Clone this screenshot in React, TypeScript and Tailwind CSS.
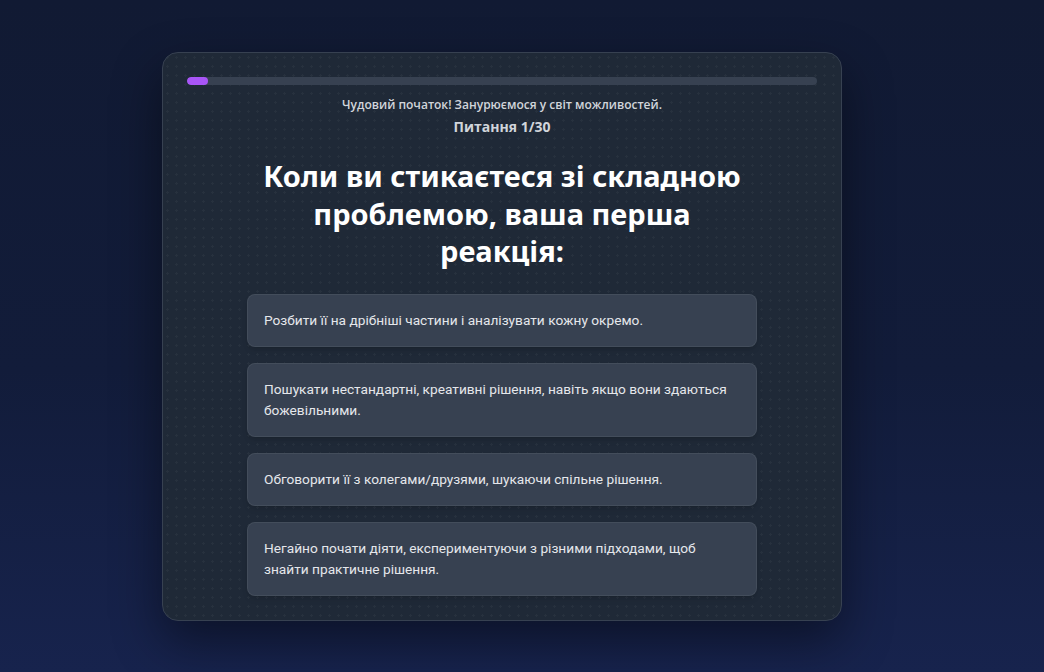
import React from "react";

const OPTIONS = [
  "Розбити її на дрібніші частини і аналізувати кожну окремо.",
  "Пошукати нестандартні, креативні рішення, навіть якщо вони здаються божевільними.",
  "Обговорити її з колегами/друзями, шукаючи спільне рішення.",
  "Негайно почати діяти, експериментуючи з різними підходами, щоб знайти практичне рішення.",
];

export default function App() {
  const current = 1;
  const total = 30;

  return (
    <div className="flex min-h-screen w-full justify-center bg-[linear-gradient(180deg,#111a33_0%,#121c3a_55%,#17234d_100%)] pt-[52px] pr-10 font-['Open_Sans',sans-serif]">
      <div className="h-fit w-[680px] rounded-2xl border border-[#374151] bg-[#1f2937] bg-[radial-gradient(circle,rgba(255,255,255,0.035)_1px,transparent_1.2px)] bg-[size:9px_9px] p-6 shadow-[0_20px_50px_rgba(0,0,0,0.45)]">
        {/* progress */}
        <div className="h-2 w-full overflow-hidden rounded-full bg-[#374151]">
          <div
            className="h-full rounded-full bg-[#a855f7]"
            style={{ width: `${(current / total) * 100}%` }}
          />
        </div>

        <p className="mt-3 text-center text-xs font-semibold leading-4 text-[#d1d5db]">
          Чудовий початок! Занурюємося у світ можливостей.
        </p>
        <p className="mt-1 text-center text-sm font-bold leading-5 text-[#d1d5db]">
          Питання {current}/{total}
        </p>

        <h1 className="mx-auto mt-5 max-w-[500px] text-center font-['Noto_Sans',sans-serif] text-[29px] font-bold leading-[37.5px] text-white">
          Коли ви стикаєтеся зі складною проблемою, ваша перша реакція:
        </h1>

        <div className="mx-auto mt-6 flex w-[510px] flex-col gap-4">
          {OPTIONS.map((o) => (
            <button
              key={o}
              className="rounded-lg border border-[#4b5563]/60 bg-[#374151] px-4 py-[15px] text-left font-['Roboto',sans-serif] text-[13.7px] leading-[21px] text-[#e5e7eb] shadow-md"
            >
              {o}
            </button>
          ))}
        </div>
      </div>
    </div>
  );
}
